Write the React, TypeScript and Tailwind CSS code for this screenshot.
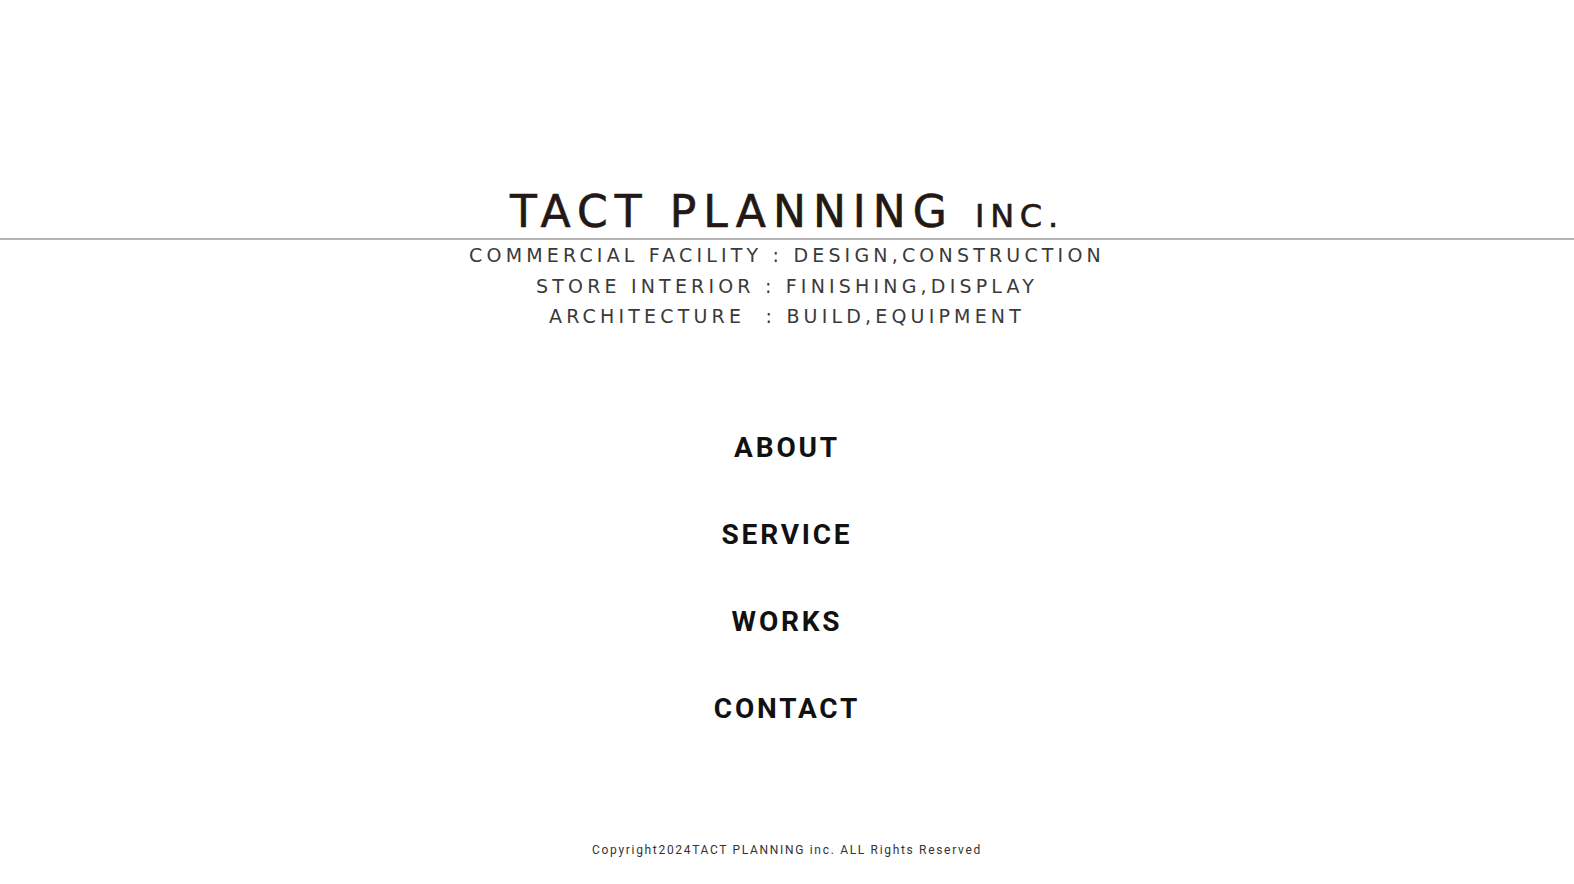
export default function App() {
  const nav = ["ABOUT", "SERVICE", "WORKS", "CONTACT"];
  const lines = [
    "COMMERCIAL FACILITY : DESIGN,CONSTRUCTION",
    "STORE INTERIOR : FINISHING,DISPLAY",
    "ARCHITECTURE \u00a0: BUILD,EQUIPMENT",
  ];

  return (
    <div className="min-h-screen w-full bg-white flex flex-col items-center">
      <header className="w-full pt-[190px] flex flex-col items-center">
        <h1 className="text-[44px] leading-[44px] text-[#231815] font-['DejaVu_Sans',sans-serif] tracking-[0.16em] whitespace-nowrap [-webkit-text-stroke:0.6px_#231815]">
          TACT PLANNING <span className="text-[32px] tracking-[0.18em]">INC.</span>
        </h1>
        <div className="w-full h-[2px] bg-[#b5b5b5]" />
        <div className="flex flex-col items-center text-[19px] leading-[30.5px] tracking-[0.22em] text-[#3a3a3a] font-['DejaVu_Sans',sans-serif]">
          {lines.map((l) => (
            <p key={l} className="whitespace-pre">{l}</p>
          ))}
        </div>
      </header>

      <nav className="mt-[99px] flex flex-col items-center gap-[53px]">
        {nav.map((n) => (
          <a
            key={n}
            href="#"
            className="text-[28px] leading-[34px] font-bold tracking-[0.1em] text-[#111] font-['Roboto',sans-serif]"
          >
            {n}
          </a>
        ))}
      </nav>

      <footer className="mt-[116px] text-[12px] leading-[16px] tracking-[0.14em] text-[#333] font-['Roboto',sans-serif]">
        Copyright2024TACT PLANNING inc. ALL Rights Reserved
      </footer>
    </div>
  );
}
